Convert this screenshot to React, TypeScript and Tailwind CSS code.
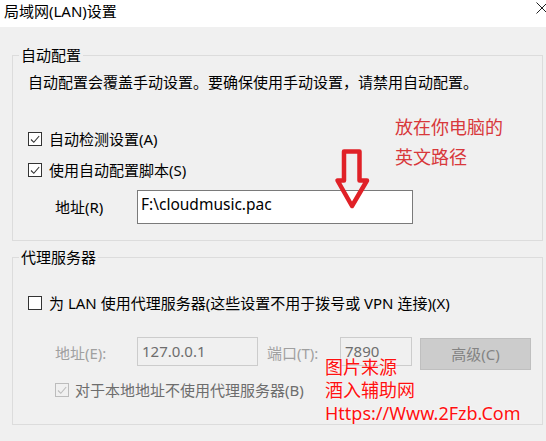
import React from "react";

const Box = ({ checked, disabled }: { checked?: boolean; disabled?: boolean }) => (
  <span
    className={
      disabled
        ? "flex h-[14px] w-[14px] shrink-0 items-center justify-center border border-[#bcbcbc] bg-[#f0f0f0]"
        : "flex h-[14px] w-[14px] shrink-0 items-center justify-center border border-[#333333] bg-white"
    }
  >
    {checked && (
      <svg width="12" height="12" viewBox="0 0 12 12">
        <polyline
          points="2,6.5 4.8,9.3 10.2,3"
          fill="none"
          stroke={disabled ? "#bcbcbc" : "#333333"}
          strokeWidth="1.1"
        />
      </svg>
    )}
  </span>
);

const App = () => {
  return (
    <div className="relative h-[441px] w-[546px] overflow-hidden bg-[#f0f0f0] font-['Noto_Sans','Noto_Sans_CJK_SC',sans-serif] text-[15px] leading-[20px] text-black">
      {/* Title bar */}
      <div className="flex h-[27px] items-start bg-white">
        <div className="flex-1 pl-[4px] pt-[1px]">局域网(LAN)设置</div>
        <svg className="mr-[-2px] mt-[2px]" width="12" height="12" viewBox="0 0 12 12">
          <path d="M0.5 0.5 L11.5 11.5 M11.5 0.5 L0.5 11.5" stroke="#222" strokeWidth="1" />
        </svg>
      </div>

      {/* Automatic configuration */}
      <fieldset className="ml-[12px] mt-[18px] w-[531px] border border-[#dcdcdc] pb-[16px] pl-[6px] pr-[6px]">
        <legend className="px-[2px]">自动配置</legend>
        <div className="pl-[9px]">
          <p className="mt-[7px]">自动配置会覆盖手动设置。要确保使用手动设置，请禁用自动配置。</p>
          <label className="mt-[37px] flex h-[20px] items-center gap-[7px]">
            <Box checked />
            自动检测设置(A)
          </label>
          <label className="mt-[11px] flex h-[20px] items-center gap-[7px]">
            <Box checked />
            使用自动配置脚本(S)
          </label>
          <div className="mt-[10px] flex items-center">
            <span className="ml-[27px] w-[82px]">地址(R)</span>
            <div className="h-[34px] w-[276px] border border-[#7a7a7a] bg-white pl-[3px] pt-[3px] text-[15.5px]">
              F:\cloudmusic.pac
            </div>
          </div>
        </div>
      </fieldset>

      {/* Proxy server */}
      <fieldset className="ml-[12px] mt-[6px] w-[531px] border border-[#dcdcdc] pb-[24px] pl-[6px] pr-[6px]">
        <legend className="px-[2px]">代理服务器</legend>
        <div className="pl-[9px]">
          <label className="mt-[26px] flex h-[20px] items-center gap-[7px]">
            <Box />
            为 LAN 使用代理服务器(这些设置不用于拨号或 VPN 连接)(X)
          </label>
          <div className="mt-[24px] flex items-start">
            <span className="ml-[27px] mt-[6px] w-[82px] text-[#a0a0a0]">地址(E):</span>
            <div className="h-[29px] w-[121px] border border-[#cccccc] bg-[#f0f0f0] pl-[4px] pt-[3px] text-[#6d6d6d]">
              127.0.0.1
            </div>
            <span className="ml-[9px] mt-[6px] w-[73px] text-[#a0a0a0]">端口(T):</span>
            <div className="h-[29px] w-[72px] border border-[#cccccc] bg-[#f0f0f0] pl-[4px] pt-[3px] text-[#6d6d6d]">
              7890
            </div>
            <button className="ml-[8px] mt-[1px] flex h-[32px] w-[111px] items-center justify-center border border-[#bfbfbf] bg-[#cccccc] text-[#838383]">
              高级(C)
            </button>
          </div>
          <label className="ml-[27px] mt-[10px] flex h-[20px] items-center gap-[6px] text-[#6d6d6d]">
            <Box checked disabled />
            对于本地地址不使用代理服务器(B)
          </label>
        </div>
      </fieldset>

      {/* Annotation */}
      <div className="absolute left-[395px] top-[112px] text-[18px] leading-[30px] text-[#d8383b]">
        <div>放在你电脑的</div>
        <div>英文路径</div>
      </div>
      <svg className="absolute left-[333px] top-[147px]" width="40" height="66" viewBox="0 0 40 66">
        <polygon
          points="11,4.5 26.5,4.5 26.5,33.5 34,33.5 19,59 4.5,33.5 11,33.5"
          fill="none"
          stroke="#e02127"
          strokeWidth="4.5"
          strokeLinejoin="round"
        />
      </svg>

      {/* Watermark */}
      <div className="absolute left-[325px] top-[356px] text-[18px] leading-[23px] text-[#ff1010] [text-shadow:0_0_2px_#ffffff]">
        <div>图片来源</div>
        <div>酒入辅助网</div>
        <div>Https://Www.2Fzb.Com</div>
      </div>
    </div>
  );
};

export default App;
